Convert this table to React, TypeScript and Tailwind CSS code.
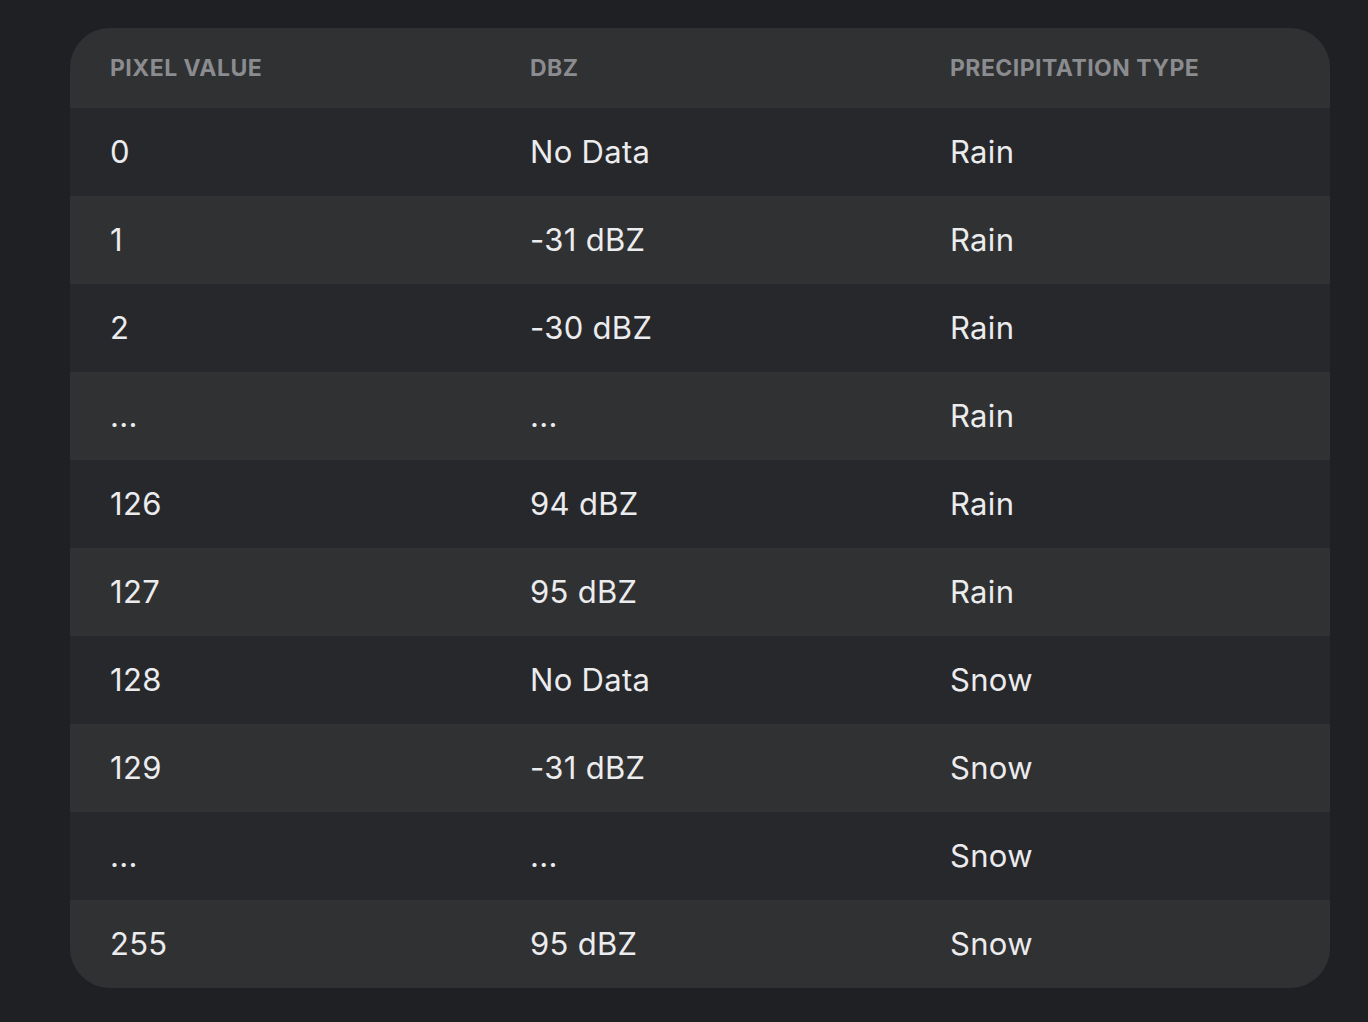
import React from "react";

const rows: [string, string, string][] = [
  ["0", "No Data", "Rain"],
  ["1", "-31 dBZ", "Rain"],
  ["2", "-30 dBZ", "Rain"],
  ["...", "...", "Rain"],
  ["126", "94 dBZ", "Rain"],
  ["127", "95 dBZ", "Rain"],
  ["128", "No Data", "Snow"],
  ["129", "-31 dBZ", "Snow"],
  ["...", "...", "Snow"],
  ["255", "95 dBZ", "Snow"],
];

export default function App() {
  return (
    <div
      className="min-h-[1022px] w-full bg-[#1f2023] pt-[28px] pl-[70px]"
      style={{ fontFamily: "Inter, 'Noto Sans', sans-serif" }}
    >
      <div className="w-[1260px] rounded-[40px] overflow-hidden bg-[#27282c]">
        <div className="grid grid-cols-3 h-[80px] items-center bg-[#303133]">
          <div className="px-[40px] text-[23px] font-bold tracking-[0.02em] text-[#8b8c8f] uppercase">Pixel Value</div>
          <div className="px-[40px] text-[23px] font-bold tracking-[0.02em] text-[#8b8c8f] uppercase">dBZ</div>
          <div className="px-[40px] text-[23px] font-bold tracking-[0.02em] text-[#8b8c8f] uppercase">Precipitation Type</div>
        </div>
        {rows.map((r, i) => (
          <div
            key={i}
            className={`grid grid-cols-3 h-[88px] items-center ${i % 2 === 0 ? "bg-[#27282c]" : "bg-[#303133]"}`}
          >
            <div className="px-[40px] text-[31px] tracking-[0.01em] text-[#ececee]">{r[0]}</div>
            <div className="px-[40px] text-[31px] tracking-[0.01em] text-[#ececee]">{r[1]}</div>
            <div className="px-[40px] text-[31px] tracking-[0.01em] text-[#ececee]">{r[2]}</div>
          </div>
        ))}
      </div>
    </div>
  );
}
